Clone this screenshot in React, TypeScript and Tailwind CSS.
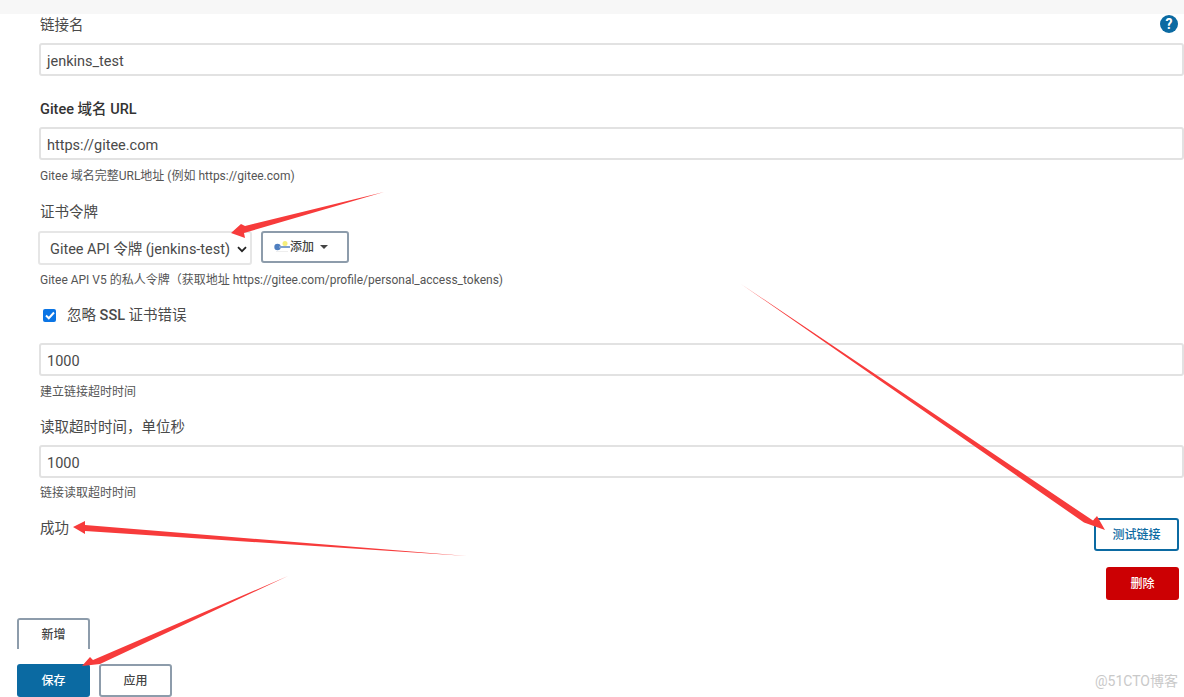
import React from 'react';

const font = { fontFamily: 'Roboto, "Noto Sans CJK SC", sans-serif' };

// tapered red annotation arrow, drawn from tail to tip
const Arrow = ({ points }: { points: string }) => (
  <polygon points={points} fill="#f73b3b" />
);

const Field = ({ value }: { value: string }) => (
  <div className="h-[33px] w-[1145px] flex items-center rounded-[3px] border-2 border-[#e2e2e2] bg-white px-[6px] pt-[4px] text-[14.5px] text-[#4a4a4a]">
    {value}
  </div>
);

const Help = ({ children, className = '' }: { children: React.ReactNode; className?: string }) => (
  <div className={`text-[12px] leading-[16px] text-[#555] ${className}`}>{children}</div>
);

const Label = ({ children, className = '' }: { children: React.ReactNode; className?: string }) => (
  <div className={`text-[14.5px] leading-[20px] text-[#4a4a4a] ${className}`}>{children}</div>
);

const App = () => {
  return (
    <div className="relative h-[697px] w-[1184px] overflow-hidden bg-white" style={font}>
      <div className="h-[14px] bg-[#f7f7f7]" />

      <div className="pl-[39px]">
        {/* 链接名 */}
        <div className="flex w-[1145px] items-start justify-between">
          <Label className="mt-[2px] pl-[1px]">链接名</Label>
          <div className="mt-[1px] mr-[6px] flex h-[18px] w-[18px] items-center justify-center rounded-full bg-[#0b6aa2] text-[14px] font-bold leading-none text-white">
            ?
          </div>
        </div>
        <div className="mt-[7px]">
          <Field value="jenkins_test" />
        </div>

        {/* Gitee 域名 */}
        <Label className="mt-[24px] pl-[1px] font-medium text-[#333]">Gitee 域名 URL</Label>
        <div className="mt-[7px]">
          <Field value="https://gitee.com" />
        </div>
        <Help className="mt-[8px] pl-[1px]">Gitee 域名完整URL地址 (例如 https://gitee.com)</Help>

        {/* 证书令牌 */}
        <Label className="mt-[19px] pl-[1px]">证书令牌</Label>
        <div className="mt-[8px] flex items-start">
          <div className="-ml-[1px] flex h-[34px] w-[214px] items-center justify-between rounded-[3px] border-2 border-[#e6e6e6] bg-white pl-[10px] pr-[3px] pt-[3px] text-[14.5px] text-[#4a4a4a]">
            <span className="whitespace-nowrap">Gitee API 令牌 (jenkins-test)</span>
            <svg width="10" height="7" viewBox="0 0 10 7" fill="none" stroke="#222" strokeWidth="1.8">
              <path d="M1 1.2 L5 5.2 L9 1.2" />
            </svg>
          </div>
          <div className="ml-[9px] flex h-[32px] w-[88px] items-center rounded-[3px] border-2 border-[#8d9cab] bg-white pl-[11px] text-[12px] font-medium text-[#444]">
            <svg width="16" height="12" viewBox="0 0 16 12">
              <circle cx="11" cy="2.5" r="2.5" fill="#f5ee7a" />
              <circle cx="3.5" cy="6" r="3.2" fill="#4f7fc0" />
              <rect x="5" y="5" width="11" height="2" fill="#7fa0cc" />
              <rect x="2" y="10" width="12" height="1" fill="#eeeeee" />
            </svg>
            <span>添加</span>
            <svg className="ml-[6px]" width="8" height="4" viewBox="0 0 8 4">
              <path d="M0 0 H8 L4 4 Z" fill="#444" />
            </svg>
          </div>
        </div>
        <Help className="mt-[7px] pl-[1px]">Gitee API V5 的私人令牌（获取地址 https://gitee.com/profile/personal_access_tokens)</Help>

        {/* 忽略 SSL */}
        <div className="mt-[18px] flex items-center pl-[4px]">
          <div className="-mt-[1px] flex h-[13px] w-[13px] items-center justify-center rounded-[2px] bg-[#0b75e5]">
            <svg width="10" height="9" viewBox="0 0 10 9" fill="none" stroke="#fff" strokeWidth="2">
              <path d="M1 4.5 L3.8 7.2 L9 1.5" />
            </svg>
          </div>
          <span className="ml-[11px] text-[14.5px] leading-[20px] text-[#4a4a4a]">
            忽略 <span className="font-medium">SSL</span> 证书错误
          </span>
        </div>

        <div className="mt-[17px]">
          <Field value="1000" />
        </div>
        <Help className="mt-[8px] pl-[1px]">建立链接超时时间</Help>

        {/* 读取超时 */}
        <Label className="mt-[18px] pl-[1px]">读取超时时间，单位秒</Label>
        <div className="mt-[7px]">
          <Field value="1000" />
        </div>
        <Help className="mt-[7px] pl-[1px]">链接读取超时时间</Help>
      </div>

      {/* 成功 + 测试链接 */}
      <div className="mt-[17px] flex items-start justify-between pl-[40px] pr-[5px]">
        <Label className="mt-[1px]">成功</Label>
        <div className="flex h-[33px] w-[85px] items-center justify-center rounded-[3px] border-2 border-[#0b6aa2] bg-white text-[12px] font-medium text-[#0b6aa2]">
          测试链接
        </div>
      </div>
      <div className="mt-[16px] flex justify-end pr-[5px]">
        <div className="flex h-[33px] w-[73px] items-center justify-center rounded-[3px] bg-[#cc0003] text-[12px] font-medium text-white">
          删除
        </div>
      </div>

      {/* 底部按钮 */}
      <div className="mt-[18px] pl-[17px]">
        <div className="flex h-[31px] w-[73px] items-center justify-center rounded-t-[3px] border-2 border-b-0 border-[#8d9cab] bg-white text-[12px] font-medium text-[#444]">
          新增
        </div>
        <div className="mt-[15px] flex gap-[9px]">
          <div className="flex h-[33px] w-[73px] items-center justify-center rounded-[3px] bg-[#0b6aa2] text-[12px] font-medium text-white">
            保存
          </div>
          <div className="flex h-[33px] w-[73px] items-center justify-center rounded-[3px] border-2 border-[#8d9cab] bg-white text-[12px] font-medium text-[#444]">
            应用
          </div>
        </div>
      </div>

      {/* annotation arrows */}
      <svg className="absolute left-0 top-0 pointer-events-none" width="1184" height="697" viewBox="0 0 1184 697">
        <Arrow points="384,192 245,226 241,224 231,233 245,238 244,233" />
        <Arrow points="741,284 1093,520.6 1097,516 1105,530 1084,522.5" />
        <Arrow points="467,556 85,525 85,521 73,527 85,534 85,531" />
        <Arrow points="288,576 93,660 90,657 82,666 100,664" />
      </svg>

      {/* watermark */}
      <div className="absolute bottom-[5px] right-[6px] text-[14px] text-[#c9c9c9]">@51CTO博客</div>
    </div>
  );
};

export default App;
